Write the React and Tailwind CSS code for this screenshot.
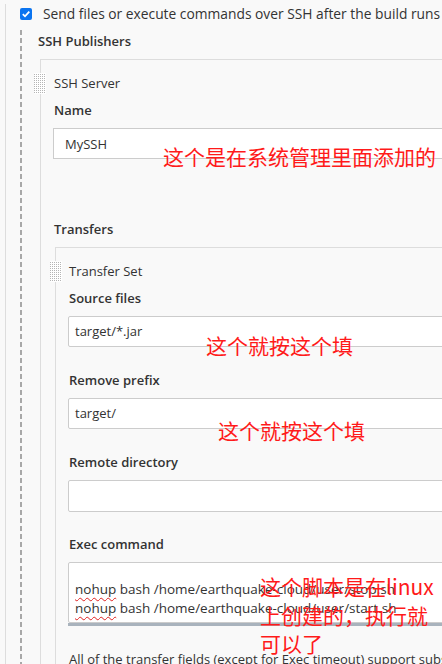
import React from 'react';

const grip = (
    <svg width="12" height="21" viewBox="0 0 12 21">
        <rect width="12" height="21" fill="#ffffff" />
        {Array.from({ length: 10 }).map((_, r) =>
            Array.from({ length: 6 }).map((_, c) => (
                <rect key={`${r}-${c}`} x={c * 2} y={r * 2 + 1} width="1" height="1" fill="#b5b5b5" />
            ))
        )}
    </svg>
);

function Label({ children, className = '' }) {
    return (
        <div className={`h-[20px] leading-[20px] font-semibold text-[#333] ${className}`}>
            {children}
        </div>
    );
}

function Field({ value, className = '' }) {
    return (
        <div
            className={`h-[31px] bg-white border border-[#ccc] rounded-[2px] pl-[6px] leading-[29px] whitespace-nowrap text-[#333] ${className}`}
        >
            {value}
        </div>
    );
}

const Nohup = () => (
    <span className="underline decoration-wavy decoration-[#e02020] decoration-1 underline-offset-[3px]">
        nohup
    </span>
);

export default function App() {
    return (
        <div
            className="relative w-[442px] h-[664px] overflow-hidden bg-[#f9f9f9] text-[13px] text-[#333]"
            style={{ fontFamily: '"Open Sans", "Noto Sans", sans-serif' }}
        >
            <div className="ml-[5px] w-[540px] border-l border-[#ddd] h-full">
                {/* Checkbox row */}
                <div className="flex items-center h-[20px] mt-[4px] pl-[14px] gap-[11px] whitespace-nowrap">
                    <div className="w-[12px] h-[12px] rounded-[2px] bg-[#0b74f0] flex items-center justify-center">
                        <svg width="10" height="10" viewBox="0 0 10 10">
                            <path d="M1.8 5.2 L4 7.3 L8.3 2.6" stroke="#fff" strokeWidth="1.8" fill="none" />
                        </svg>
                    </div>
                    <span className="text-[13.8px]">Send files or execute commands over SSH after the build runs</span>
                </div>

                {/* SSH Publishers */}
                <div className="mt-[6px] ml-[14px] h-[700px] bg-[repeating-linear-gradient(to_bottom,#a8a8a8_0,#a8a8a8_5px,transparent_5px,transparent_8px)] bg-[length:2px_100%] bg-no-repeat">
                    <div className="pl-[18px] pt-[1px]">
                        <div className="h-[20px] leading-[20px] font-semibold">SSH Publishers</div>

                        {/* SSH Server box */}
                        <div className="relative mt-[8px] ml-[2px] border-l border-t border-[#ddd] pl-[13px] pt-[13px]">
                            <div className="absolute left-[-7px] top-[13px]">{grip}</div>
                            <div className="h-[20px] leading-[20px]">SSH Server</div>

                            <Label className="mt-[7px]">Name</Label>
                            <div className="mt-[8px] -ml-[1px] h-[31px] bg-white border border-[#ccc] pl-[11px] leading-[31px]">
                                MySSH
                            </div>

                            <Label className="mt-[60px]">Transfers</Label>

                            {/* Transfer Set box */}
                            <div className="relative mt-[8px] ml-[1px] border-l border-t border-[#ddd] pl-[13px] pt-[13px]">
                                <div className="absolute left-[-6px] top-[13px]">{grip}</div>
                                <div className="h-[20px] leading-[20px]">Transfer Set</div>

                                <Label className="mt-[7px]">Source files</Label>
                                <Field className="mt-[8px] -ml-[1px]" value="target/*.jar" />

                                <Label className="mt-[23px]">Remove prefix</Label>
                                <Field className="mt-[8px] -ml-[1px]" value="target/" />

                                <Label className="mt-[23px]">Remote directory</Label>
                                <Field className="mt-[8px] -ml-[1px] h-[32px]" value="" />

                                <Label className="mt-[22px]">Exec command</Label>
                                <div className="mt-[8px] -ml-[1px]">
                                    <div className="h-[61px] bg-white border border-[#ccc] rounded-[2px] pl-[6px] pt-[17px] text-[13.5px] leading-[19px] whitespace-nowrap">
                                        <div>
                                            <Nohup /> bash /home/earthquake-cloud/user/stop.sh
                                        </div>
                                        <div>
                                            <Nohup /> bash /home/earthquake-cloud/user/start.sh
                                        </div>
                                    </div>
                                    <div className="h-[3px] bg-[#a9b3bd]" />
                                </div>

                                <div className="mt-[24px] whitespace-nowrap">
                                    All of the transfer fields (except for Exec timeout) support substitution of Jenkins environment variables
                                </div>
                            </div>
                        </div>
                    </div>
                </div>
            </div>

            {/* Red annotations */}
            <div
                className="absolute text-[#ff1a1a] text-[21px] leading-[28px] whitespace-nowrap"
                style={{ fontFamily: '"Noto Sans CJK SC", sans-serif', left: 163, top: 142 }}
            >
                这个是在系统管理里面添加的
            </div>
            <div
                className="absolute text-[#ff1a1a] text-[21px] leading-[28px] whitespace-nowrap"
                style={{ fontFamily: '"Noto Sans CJK SC", sans-serif', left: 206, top: 331 }}
            >
                这个就按这个填
            </div>
            <div
                className="absolute text-[#ff1a1a] text-[21px] leading-[28px] whitespace-nowrap"
                style={{ fontFamily: '"Noto Sans CJK SC", sans-serif', left: 218, top: 416 }}
            >
                这个就按这个填
            </div>
            <div
                className="absolute w-[180px] text-[#ff1a1a] text-[21px] leading-[28.5px]"
                style={{ fontFamily: '"Noto Sans CJK SC", sans-serif', left: 260, top: 572 }}
            >
                这个脚本是在linux上创建的，执行就可以了
            </div>
        </div>
    );
}
